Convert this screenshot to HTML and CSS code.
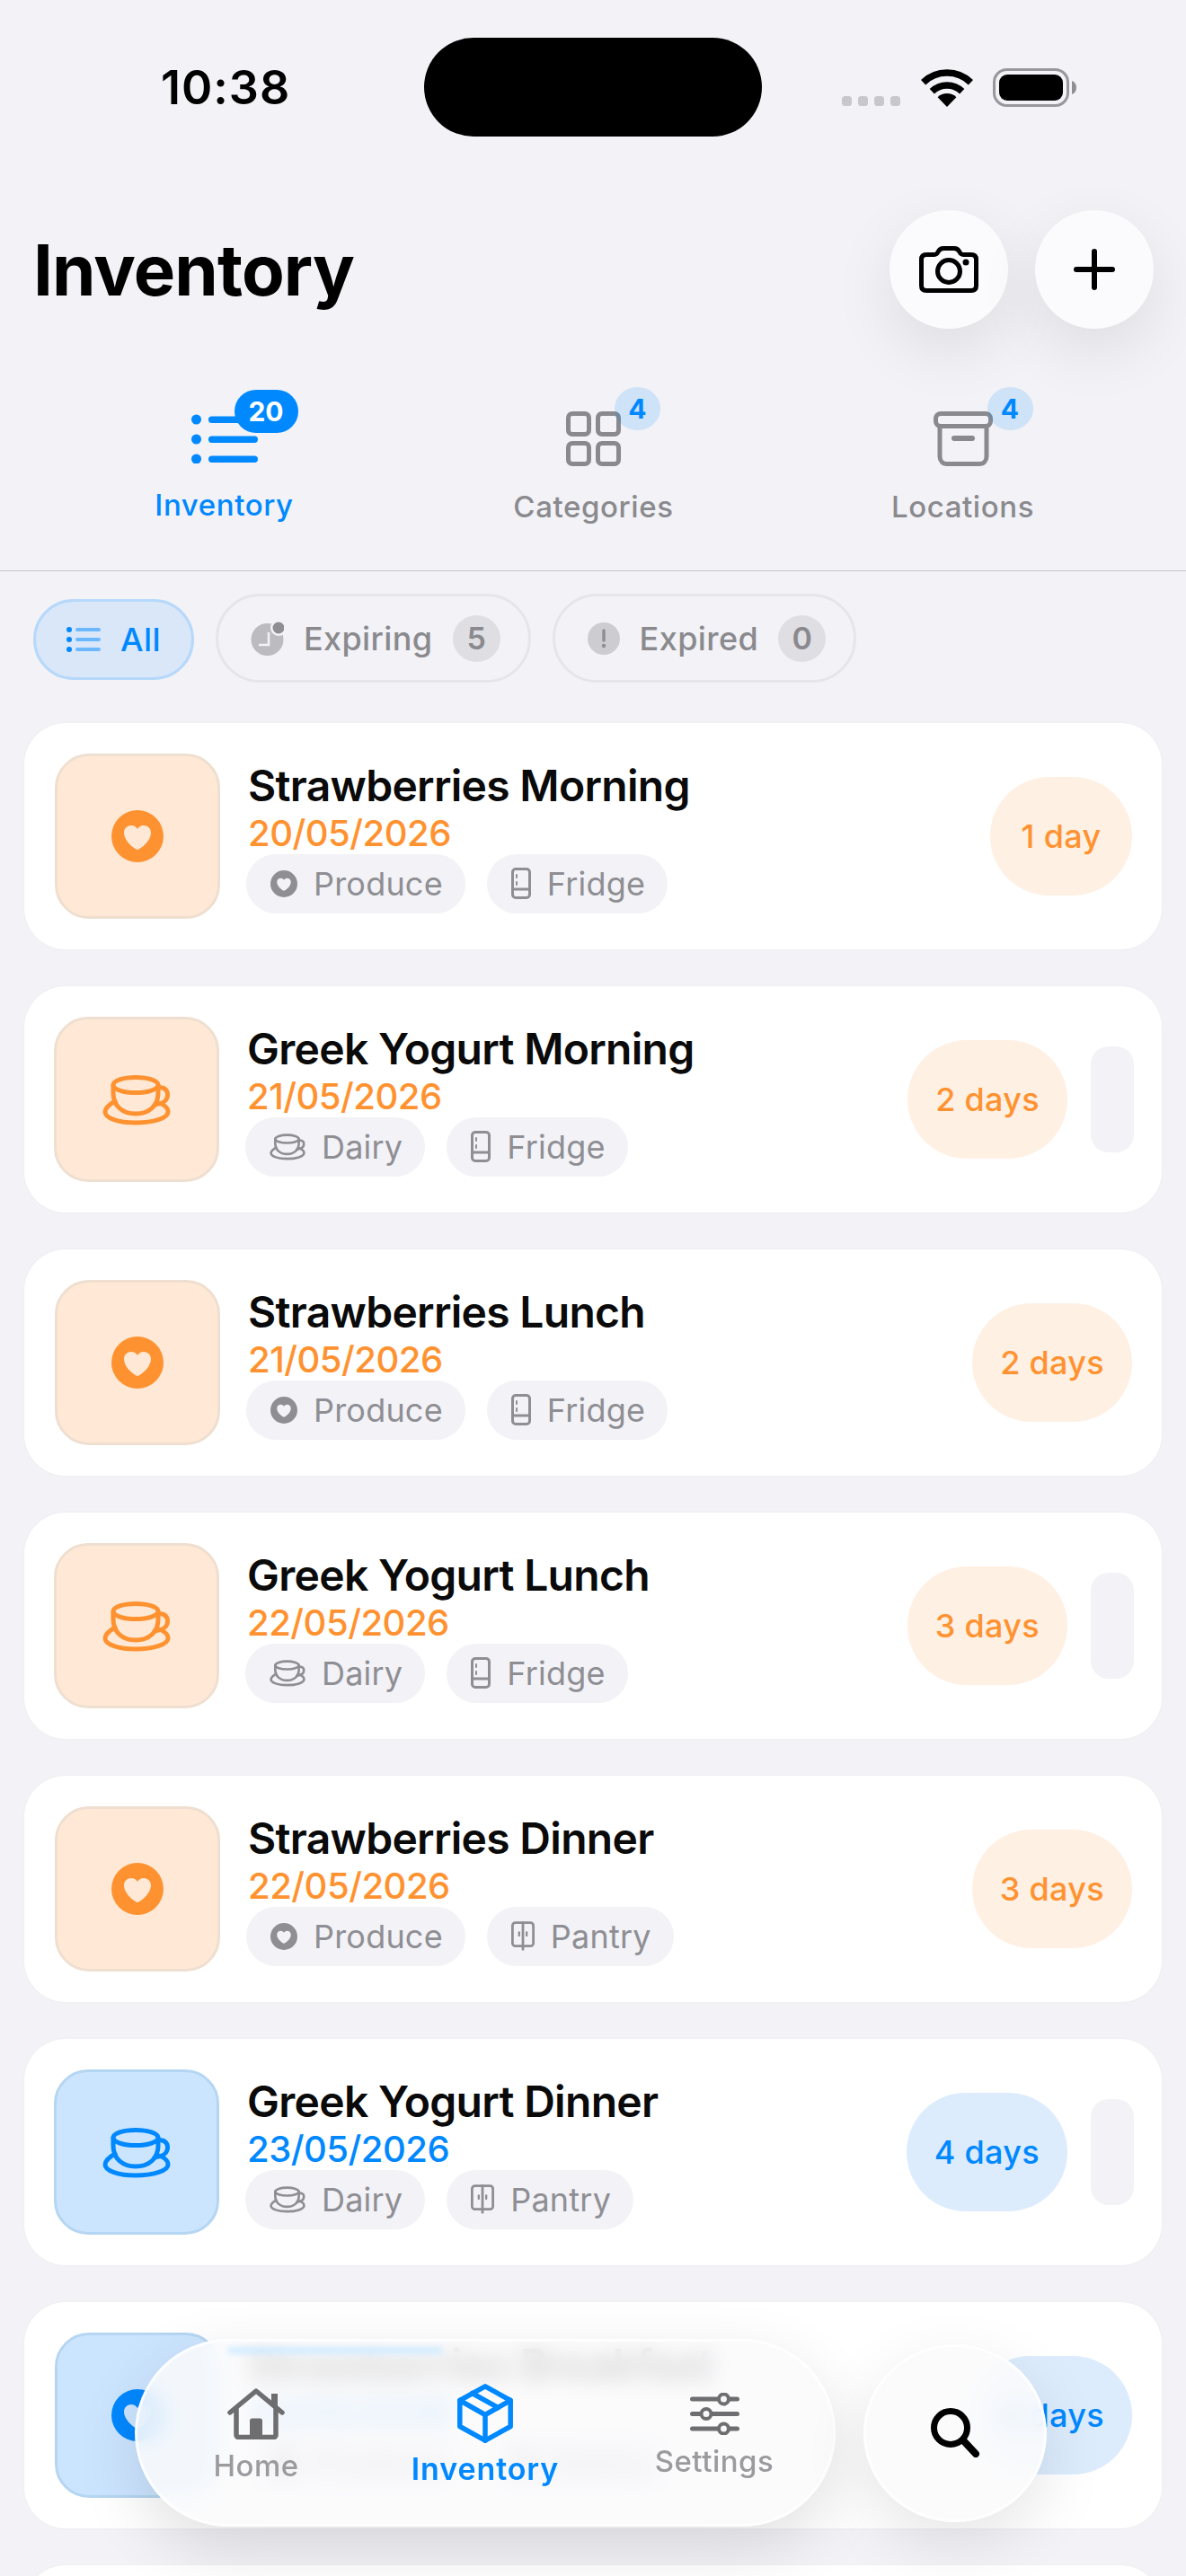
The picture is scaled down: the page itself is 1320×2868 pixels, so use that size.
FILE: index.html
```html
<!DOCTYPE html>
<html lang="en">
<head>
<meta charset="utf-8">
<title>Inventory</title>
<link rel="stylesheet" href="styles.css">
</head>
<body>
<svg class="defs" width="0" height="0" aria-hidden="true">
  <symbol id="cup" viewBox="0 0 76 56">
    <g fill="none" stroke="currentColor" stroke-width="5" stroke-linecap="round" stroke-linejoin="round">
      <ellipse cx="37" cy="11" rx="25" ry="8.5"/>
      <path d="M12 11V20C12 34 22 43 37 43C52 43 62 34 62 20V11"/>
      <path d="M62 14C70 13 74 18 72 25C71 29 66 32 58 33"/>
      <path d="M14 29C7 33 3 37 3 41C3 48 18 53 37 53C56 53 73 48 73 41C73 37 69 33 63 31"/>
    </g>
  </symbol>
  <symbol id="heart" viewBox="0 0 58 58">
    <path fill="currentColor" fill-rule="evenodd" d="M29 0A29 29 0 1 1 29 58A29 29 0 1 1 29 0ZM29 44C27 44 14 35 14 25C14 20 18 17 22 17C25 17 27.5 18.5 29 21C30.5 18.5 33 17 36 17C40 17 44 20 44 25C44 35 31 44 29 44Z"/>
  </symbol>
  <symbol id="fridge" viewBox="0 0 22 35">
    <g fill="none" stroke="currentColor" stroke-width="3" stroke-linecap="round">
      <rect x="1.5" y="1.5" width="19" height="32" rx="3.5"/>
      <path d="M1.5 24H20.5"/>
      <path d="M6 8V11M6 16V19" stroke-width="2"/>
    </g>
  </symbol>
  <symbol id="pantry" viewBox="0 0 28 35">
    <g fill="none" stroke="currentColor" stroke-width="3" stroke-linecap="round">
      <rect x="1.5" y="1.5" width="25" height="28" rx="3.5"/>
      <path d="M14 1.5V33.5"/>
      <path d="M9.5 13V17M18.5 13V17" stroke-width="2.5"/>
    </g>
  </symbol>
</svg>

<div class="phone">
  <div class="status">
    <span class="time">10:38</span>
    <div class="island"></div>
    <div class="status-right">
      <svg class="signal" width="65" height="11" viewBox="0 0 65 11"><rect width="11" height="11" rx="3.5"/><rect x="18" width="11" height="11" rx="3.5"/><rect x="36" width="11" height="11" rx="3.5"/><rect x="54" width="11" height="11" rx="3.5"/></svg>
      <svg class="wifi" width="58" height="42" viewBox="0 0 57 42"><path d="M2.1 14.7A38 38 0 0 1 54.9 14.7" fill="none" stroke="#000" stroke-width="7.5"/><path d="M11.8 24.7A24 24 0 0 1 45.2 24.7" fill="none" stroke="#000" stroke-width="7.5"/><path d="M28.5 42L18.1 31.3A15 15 0 0 1 38.9 31.3Z" fill="#000"/></svg>
      <svg class="battery" width="93" height="43" viewBox="0 0 93 43"><rect x="1.5" y="1.5" width="82" height="40" rx="14" fill="none" stroke="#98989c" stroke-width="3"/><rect x="7" y="7" width="71" height="29" rx="9" fill="#000"/><path d="M88 14C91 15 93 18 93 21.5C93 25 91 28 88 29Z" fill="#8e8e93"/></svg>
    </div>
  </div>

  <header class="header">
    <h1 class="title">Inventory</h1>
    <div class="header-actions">
      <button class="round-btn" aria-label="Camera">
        <svg width="66" height="52" viewBox="0 0 66 52"><g fill="none" stroke="#000" stroke-width="5" stroke-linejoin="round"><path d="M8 9.5H17C19 9.5 20 8.5 21 6.5C22.5 3.5 24 2.5 27 2.5H39C42 2.5 43.500 3.500 45 6.500C46 8.500 47 9.500 49 9.500H58C61.500 9.500 63.500 11.500 63.500 15V44C63.500 47.500 61.500 49.500 58 49.500H8C4.500 49.500 2.500 47.500 2.500 44V15C2.500 11.500 4.500 9.500 8 9.500Z"/><circle cx="33" cy="28" r="12.500"/></g><circle cx="52" cy="18" r="3.500"/></svg>
      </button>
      <button class="round-btn" aria-label="Add">
        <svg width="46" height="46" viewBox="0 0 46 46"><path d="M23 3V43M3 23H43" fill="none" stroke="#000" stroke-width="6" stroke-linecap="round"/></svg>
      </button>
    </div>
  </header>

  <nav class="tabs">
    <div class="tab tab-active">
      <div class="tab-icon">
        <svg width="74" height="55" viewBox="0 0 74 55"><g fill="#08f"><circle cx="5.500" cy="6" r="5.500"/><circle cx="5.500" cy="28" r="5.500"/><circle cx="5.500" cy="50" r="5.500"/><rect x="19" y="2.500" width="55" height="7.500" rx="3.700"/><rect x="19" y="24.500" width="55" height="7.500" rx="3.700"/><rect x="19" y="46.500" width="55" height="7.500" rx="3.700"/></g></svg>
        <span class="badge badge-solid">20</span>
      </div>
      <span class="tab-label">Inventory</span>
    </div>
    <div class="tab">
      <div class="tab-icon">
        <svg width="61" height="61" viewBox="0 0 61 61"><g fill="none" stroke="#8a8a8e" stroke-width="5"><rect x="2.500" y="2.500" width="23" height="23" rx="4.500"/><rect x="35.500" y="2.500" width="23" height="23" rx="4.500"/><rect x="2.500" y="35.500" width="23" height="23" rx="4.500"/><rect x="35.500" y="35.500" width="23" height="23" rx="4.500"/></g></svg>
        <span class="badge badge-soft badge-cat">4</span>
      </div>
      <span class="tab-label">Categories</span>
    </div>
    <div class="tab">
      <div class="tab-icon">
        <svg width="66" height="61" viewBox="0 0 66 61"><g fill="none" stroke="#8a8a8e" stroke-width="5" stroke-linecap="round" stroke-linejoin="round"><rect x="2.500" y="2.500" width="61" height="14" rx="5.500"/><path d="M7 17V50C7 55 10 58.500 15 58.500H51C56 58.500 59 55 59 50V17"/><path d="M23 30H43" stroke-width="6"/></g></svg>
        <span class="badge badge-soft badge-loc">4</span>
      </div>
      <span class="tab-label">Locations</span>
    </div>
  </nav>

  <div class="filters">
    <div class="filter filter-all">
      <svg width="38" height="30" viewBox="0 0 38 30"><g fill="#08f"><circle cx="3" cy="4" r="3"/><circle cx="3" cy="15" r="3"/><circle cx="3" cy="26" r="3"/></g><g fill="#6cb8ff"><rect x="10" y="2" width="28" height="4" rx="2"/><rect x="10" y="13" width="28" height="4" rx="2"/><rect x="10" y="24" width="28" height="4" rx="2"/></g></svg>
      <span>All</span>
    </div>
    <div class="filter">
      <svg width="37" height="38" viewBox="0 0 37 38"><circle cx="18.500" cy="20" r="18" fill="#bcbcc0"/><path d="M20 12V26H9" fill="none" stroke="#f2f2f7" stroke-width="2.500"/><circle cx="31" cy="7" r="9" fill="#f2f2f7"/><circle cx="31" cy="7" r="6.500" fill="#8e8e93"/></svg>
      <span>Expiring</span>
      <span class="count">5</span>
    </div>
    <div class="filter">
      <svg width="36" height="38" viewBox="0 0 36 38"><circle cx="18" cy="19" r="18" fill="#cdcdd1"/><path d="M18 10V21" stroke="#8e8e93" stroke-width="3.500" stroke-linecap="round"/><circle cx="18" cy="27" r="2.200" fill="#8e8e93"/></svg>
      <span>Expired</span>
      <span class="count">0</span>
    </div>
  </div>

  <main class="list">
    <article class="card card-plain">
      <div class="thumb thumb-orange"><svg class="i-heart"><use href="#heart"/></svg></div>
      <div class="info">
        <div class="name">Strawberries Morning</div>
        <div class="date date-orange">20/05/2026</div>
        <div class="chips">
          <span class="chip"><svg class="c-heart"><use href="#heart"/></svg>Produce</span>
          <span class="chip"><svg class="c-fridge"><use href="#fridge"/></svg>Fridge</span>
        </div>
      </div>
      <span class="pill pill-orange">1 day</span>
    </article>

    <article class="card card-handle">
      <div class="thumb thumb-orange"><svg class="i-cup"><use href="#cup"/></svg></div>
      <div class="info">
        <div class="name">Greek Yogurt Morning</div>
        <div class="date date-orange">21/05/2026</div>
        <div class="chips">
          <span class="chip"><svg class="c-cup"><use href="#cup"/></svg>Dairy</span>
          <span class="chip"><svg class="c-fridge"><use href="#fridge"/></svg>Fridge</span>
        </div>
      </div>
      <span class="pill pill-orange">2 days</span>
      <span class="handle"></span>
    </article>

    <article class="card card-plain">
      <div class="thumb thumb-orange"><svg class="i-heart"><use href="#heart"/></svg></div>
      <div class="info">
        <div class="name">Strawberries Lunch</div>
        <div class="date date-orange">21/05/2026</div>
        <div class="chips">
          <span class="chip"><svg class="c-heart"><use href="#heart"/></svg>Produce</span>
          <span class="chip"><svg class="c-fridge"><use href="#fridge"/></svg>Fridge</span>
        </div>
      </div>
      <span class="pill pill-orange">2 days</span>
    </article>

    <article class="card card-handle">
      <div class="thumb thumb-orange"><svg class="i-cup"><use href="#cup"/></svg></div>
      <div class="info">
        <div class="name">Greek Yogurt Lunch</div>
        <div class="date date-orange">22/05/2026</div>
        <div class="chips">
          <span class="chip"><svg class="c-cup"><use href="#cup"/></svg>Dairy</span>
          <span class="chip"><svg class="c-fridge"><use href="#fridge"/></svg>Fridge</span>
        </div>
      </div>
      <span class="pill pill-orange">3 days</span>
      <span class="handle"></span>
    </article>

    <article class="card card-plain">
      <div class="thumb thumb-orange"><svg class="i-heart"><use href="#heart"/></svg></div>
      <div class="info">
        <div class="name">Strawberries Dinner</div>
        <div class="date date-orange">22/05/2026</div>
        <div class="chips">
          <span class="chip"><svg class="c-heart"><use href="#heart"/></svg>Produce</span>
          <span class="chip"><svg class="c-pantry"><use href="#pantry"/></svg>Pantry</span>
        </div>
      </div>
      <span class="pill pill-orange">3 days</span>
    </article>

    <article class="card card-handle">
      <div class="thumb thumb-blue"><svg class="i-cup"><use href="#cup"/></svg></div>
      <div class="info">
        <div class="name">Greek Yogurt Dinner</div>
        <div class="date date-blue">23/05/2026</div>
        <div class="chips">
          <span class="chip"><svg class="c-cup"><use href="#cup"/></svg>Dairy</span>
          <span class="chip"><svg class="c-pantry"><use href="#pantry"/></svg>Pantry</span>
        </div>
      </div>
      <span class="pill pill-blue">4 days</span>
      <span class="handle"></span>
    </article>

    <article class="card card-plain">
      <div class="thumb thumb-blue"><svg class="i-heart"><use href="#heart"/></svg></div>
      <div class="info">
        <div class="name">Strawberries Breakfast</div>
        <div class="date date-blue">23/05/2026</div>
        <div class="chips">
          <span class="chip"><svg class="c-heart"><use href="#heart"/></svg>Produce</span>
          <span class="chip"><svg class="c-pantry"><use href="#pantry"/></svg>Pantry</span>
        </div>
      </div>
      <span class="pill pill-blue">4 days</span>
    </article>

    <article class="card card-plain"></article>
  </main>

  <div class="dock">
    <nav class="dock-bar">
      <div class="dock-item">
        <svg width="64" height="57" viewBox="0 0 64 57"><g fill="none" stroke="#6e6e70" stroke-width="5.500" stroke-linecap="round" stroke-linejoin="round"><path d="M3 27L32 3L61 27"/><path d="M10 23V52C10 53.500 11 54.500 12.500 54.500H51.500C53 54.500 54 53.500 54 52V23"/></g><rect x="49" y="6" width="7" height="14" fill="#6e6e70"/><path d="M25 36C25 34.500 26 33.500 27.500 33.500H36.500C38 33.500 39 34.500 39 36V55H25Z" fill="#6e6e70"/></svg>
        <span class="dock-label">Home</span>
      </div>
      <div class="dock-item dock-active">
        <svg width="62" height="66" viewBox="0 0 62 66"><g fill="none" stroke="#08f" stroke-width="5.500" stroke-linejoin="round" stroke-linecap="round"><path d="M31 2.800L59.200 18.500V47.500L31 63.200L2.800 47.500V18.500Z"/><path d="M2.800 18.500L31 34.500L59.200 18.500M31 34.500V63.200"/><path d="M16.500 10.500L45.500 26.500"/></g></svg>
        <span class="dock-label">Inventory</span>
      </div>
      <div class="dock-item">
        <svg width="55" height="47" viewBox="0 0 55 47"><g stroke="#6e6e70" stroke-width="5" stroke-linecap="round"><path d="M2.500 7H52.500M2.500 23.500H52.500M2.500 40H52.500"/><g fill="#f7f7f9" stroke-width="4"><circle cx="37.500" cy="7" r="5.500"/><circle cx="18" cy="23.500" r="5.500"/><circle cx="37.500" cy="40" r="5.500"/></g></g></svg>
        <span class="dock-label">Settings</span>
      </div>
    </nav>
    <button class="dock-search" aria-label="Search">
      <svg width="56" height="55" viewBox="0 0 56 55"><circle cx="23" cy="22" r="18.500" fill="none" stroke="#000" stroke-width="7"/><path d="M37 36L51 51" stroke="#000" stroke-width="8" stroke-linecap="round"/></svg>
    </button>
  </div>
</div>
</body>
</html>
```

FILE: styles.css
```css
* { box-sizing: border-box; }

html, body {
  margin: 0;
  padding: 0;
  height: 2868px;
  overflow: hidden;
  background: #f2f2f7;
  font-family: Inter, "Liberation Sans", sans-serif;
}

.defs { position: absolute; }

.phone {
  position: relative;
  width: 1320px;
  height: 2868px;
  overflow: hidden;
  background: #f2f2f7;
}

/* status bar */
.status {
  display: flex;
  align-items: center;
  padding: 42px 0 0 179px;
}
.time {
  width: 293px;
  font-size: 52px;
  font-weight: 600;
  letter-spacing: 1px;
  color: #000;
}
.island {
  width: 376px;
  height: 110px;
  border-radius: 55px;
  background: #000;
}
.status-right {
  display: flex;
  align-items: flex-end;
  margin-left: 89px;
}
.signal { fill: #c7c7cc; margin-bottom: 1px; }
.wifi { margin-left: 23px; }
.battery { margin-left: 22px; }

/* header */
.header {
  display: flex;
  align-items: center;
  justify-content: space-between;
  margin-top: 82px;
  padding: 0 36px 0 37px;
}
.title {
  margin: 0;
  font-size: 78px;
  font-weight: 700;
  letter-spacing: -0.9px;
  color: #000;
}
.header-actions { display: flex; gap: 30px; }
.round-btn {
  display: flex;
  align-items: center;
  justify-content: center;
  width: 132px;
  height: 132px;
  padding: 0;
  border: 0;
  border-radius: 50%;
  background: #fbfbfd;
  box-shadow: 0 24px 70px rgba(0, 0, 0, 0.09);
}

/* segment tabs */
.tabs {
  display: grid;
  grid-template-columns: repeat(3, 411px);
  margin-top: 92px;
  padding: 0 44px 51px;
  border-bottom: 1px solid #c6c6c8;
}
.tab {
  display: flex;
  flex-direction: column;
  align-items: center;
}
.tab-icon {
  position: relative;
  display: flex;
  align-items: center;
  justify-content: center;
  height: 61px;
}
.tab-label {
  margin-top: 25px;
  font-size: 33px;
  line-height: 40px;
  font-weight: 500;
  letter-spacing: 0.6px;
  color: #8a8a8e;
}
.tab-active .tab-label {
  margin-top: 23px;
  margin-bottom: 2px;
  color: #08f;
}
.badge {
  position: absolute;
  display: flex;
  align-items: center;
  justify-content: center;
  height: 48px;
  font-size: 30px;
  font-weight: 700;
}
.badge-solid {
  top: -24px;
  left: 48px;
  width: 71px;
  border-radius: 24px;
  background: #08f;
  color: #fff;
}
.badge-soft {
  top: -27px;
  width: 51px;
  border-radius: 50%;
  background: rgba(0, 136, 255, 0.15);
  color: #08f;
}
.badge-cat { left: 54px; }
.badge-loc { left: 60px; }

/* filters */
.filters {
  display: flex;
  gap: 24px;
  margin-top: 25px;
  padding-left: 37px;
}
.filter {
  display: flex;
  align-items: center;
  gap: 22px;
  height: 99px;
  padding: 0 31px 0 36px;
  border: 3px solid #e5e5ea;
  border-radius: 50px;
  font-size: 36px;
  font-weight: 500;
  letter-spacing: 0.4px;
  color: #8a8a8e;
}
.filter-all {
  height: 90px;
  margin-top: 6px;
  padding: 0 34px;
  border-color: #b5d8fb;
  background: #d9e7f9;
  color: #08f;
}
.count {
  display: flex;
  align-items: center;
  justify-content: center;
  width: 53px;
  height: 52px;
  border-radius: 50%;
  background: #dedee3;
  font-size: 34px;
  font-weight: 600;
  letter-spacing: 0;
}

/* cards */
.list {
  display: flex;
  flex-direction: column;
  gap: 41px;
  margin-top: 45px;
  padding: 0 27px;
}
.card {
  display: flex;
  flex: none;
  align-items: center;
  height: 252px;
  border-radius: 46px;
  background: #fff;
  box-shadow: 0 0 0 1.5px rgba(0, 0, 0, 0.012);
}
.card-plain { padding: 0 33px 0 34px; }
.card-handle { padding: 0 31px 0 33px; }

.thumb {
  display: flex;
  flex: none;
  align-items: center;
  justify-content: center;
  width: 184px;
  height: 184px;
  border: 3px solid;
  border-radius: 38px;
}
.thumb-orange { border-color: #efdfd0; background: #ffe9d6; color: #ff9230; }
.thumb-blue { border-color: #b5d6f2; background: #cce5ff; color: #08f; }

.i-heart { width: 58px; height: 58px; }
.i-cup { width: 76px; height: 56px; margin-top: 2px; }

.info {
  display: flex;
  flex-direction: column;
  margin-top: 3px;
  margin-left: 31px;
}
.name {
  font-size: 48px;
  line-height: 51px;
  font-weight: 600;
  letter-spacing: -0.7px;
  color: #0a0a0a;
}
.date {
  margin-top: 4px;
  font-size: 40px;
  line-height: 47px;
  font-weight: 500;
  letter-spacing: -0.5px;
}
.date-orange { color: #ff9230; }
.date-blue { color: #08f; }

.chips {
  display: flex;
  gap: 24px;
  margin-left: -2px;
}
.chip {
  display: flex;
  align-items: center;
  gap: 18px;
  height: 66px;
  padding: 0 25px 0 27px;
  border-radius: 33px;
  background: #f2f2f7;
  font-size: 36px;
  font-weight: 400;
  letter-spacing: 0.2px;
  color: #8e8e93;
}
.c-heart { width: 30px; height: 30px; }
.c-cup { width: 40px; height: 30px; }
.c-fridge { width: 22px; height: 35px; }
.c-pantry { width: 26px; height: 35px; }

.pill {
  display: flex;
  flex: none;
  align-items: center;
  justify-content: center;
  min-width: 158px;
  height: 132px;
  margin-left: auto;
  padding: 0 31px;
  border-radius: 66px;
  font-size: 36px;
  font-weight: 500;
  letter-spacing: 0.3px;
}
.pill-orange { background: #fff0e4; color: #ff9230; }
.pill-blue { background: #dcecfd; color: #08f; }

.handle {
  flex: none;
  width: 48px;
  height: 118px;
  margin-left: 26px;
  border-radius: 20px;
  background: #f2f2f7;
}

/* floating dock */
.dock {
  position: absolute;
  top: 2604px;
  left: 150px;
  display: flex;
  align-items: center;
  gap: 31px;
}
.dock-bar {
  position: relative;
  display: flex;
  align-items: center;
  justify-content: center;
  width: 780px;
  height: 209px;
  padding-top: 6px;
  border: 3px solid rgba(255, 255, 255, 0.85);
  border-radius: 105px;
  background: rgba(250, 250, 252, 0.84);
  -webkit-backdrop-filter: blur(12px);
  backdrop-filter: blur(12px);
  box-shadow: 0 24px 70px rgba(0, 0, 0, 0.12);
}
.dock-bar::before {
  content: "";
  position: absolute;
  top: 6px;
  left: 100px;
  width: 240px;
  height: 8px;
  border-radius: 4px;
  background: #d3ecff;
  filter: blur(3px);
}
.dock-item {
  position: relative;
  display: flex;
  flex-direction: column;
  align-items: center;
  gap: 9px;
  width: 255px;
}
.dock-label {
  font-size: 33px;
  line-height: 40px;
  font-weight: 500;
  letter-spacing: 0.5px;
  color: #9b9b9f;
}
.dock-active .dock-label {
  font-size: 34px;
  font-weight: 600;
  letter-spacing: 0.9px;
  color: #08f;
}
.dock-search {
  display: flex;
  flex: none;
  align-items: center;
  justify-content: center;
  width: 204px;
  height: 198px;
  padding: 0;
  border: 3px solid rgba(255, 255, 255, 0.85);
  border-radius: 50%;
  background: rgba(250, 250, 252, 0.88);
  -webkit-backdrop-filter: blur(12px);
  backdrop-filter: blur(12px);
  box-shadow: 0 24px 70px rgba(0, 0, 0, 0.1);
}
```
